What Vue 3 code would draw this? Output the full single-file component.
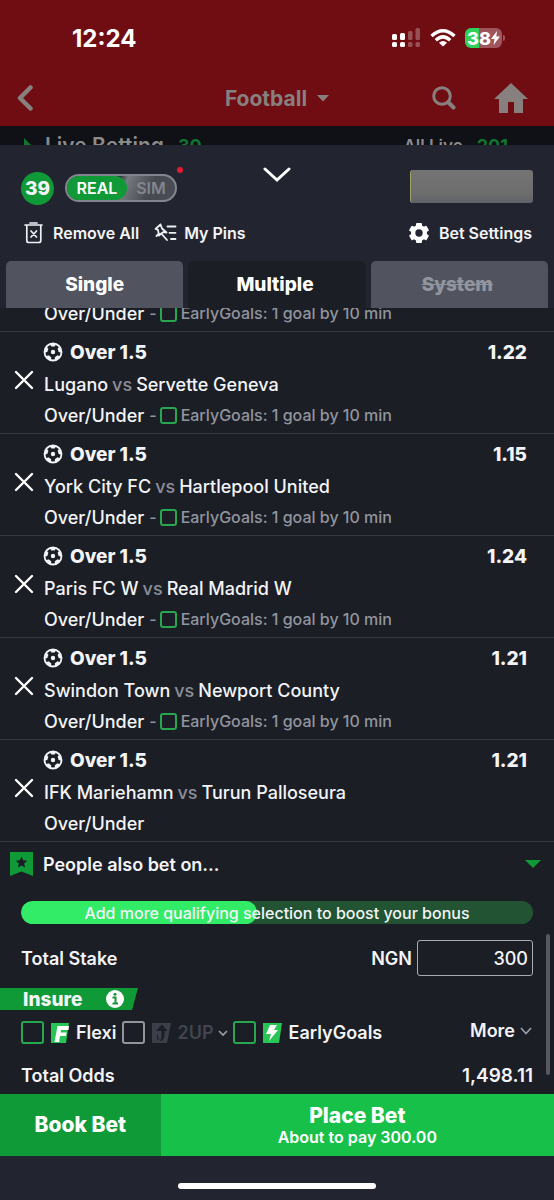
<script setup>
import { ref } from 'vue'

const bets = [
  { id: 1, home: 'Lugano', away: 'Servette Geneva', odds: '1.22', early: true },
  { id: 2, home: 'York City FC', away: 'Hartlepool United', odds: '1.15', early: true },
  { id: 3, home: 'Paris FC W', away: 'Real Madrid W', odds: '1.24', early: true },
  { id: 4, home: 'Swindon Town', away: 'Newport County', odds: '1.21', early: true },
  { id: 5, home: 'IFK Mariehamn', away: 'Turun Palloseura', odds: '1.21', early: false },
]
const patchAngles = [0, 72, 144, 216, 288]
const stake = ref('300')
</script>

<template>
  <div class="screen">
    <div class="status">
      <span class="clock">12:24</span>
      <div class="indicators">
        <svg class="signal" width="30" height="20" viewBox="0 0 30 20" fill="#fff">
          <rect x="1" y="6" width="5" height="6" rx="1.5" /><rect x="9" y="5" width="5" height="7" rx="1.5" />
          <rect x="1" y="14" width="5" height="5" rx="1.5" /><rect x="9" y="14" width="5" height="5" rx="1.5" />
          <g opacity=".28"><rect x="17" y="3" width="4.500" height="9" rx="1.500" /><rect x="24.500" y="0" width="4.500" height="12" rx="1.500" /><rect x="17" y="14" width="4.500" height="5" rx="1.500" /><rect x="24.500" y="14" width="4.500" height="5" rx="1.500" /></g>
        </svg>
        <svg width="26" height="20" viewBox="0 0 26 20" fill="none" stroke="#fff" stroke-width="3.400">
          <path d="M1.500 8Q13-2.500 24.500 8" /><path d="M5.800 12.200Q13 5.600 20.200 12.200" />
          <path d="M13 18.600L9 14.700Q13 11.400 17 14.700Z" fill="#fff" stroke="none" />
        </svg>
        <div class="battery">
          <span>38</span>
          <svg width="9" height="14" viewBox="0 0 9 14"><path d="M6 0L0 8h3.500L2.500 14L9 5.500H5.300z" fill="#fff" /></svg>
        </div>
      </div>
    </div>

    <header class="topbar">
      <button class="plain" aria-label="Back">
        <svg width="18" height="28" viewBox="0 0 18 28"><path d="M15.500 3.500L5 14l10.500 10.500" fill="none" stroke="#87807e" stroke-width="4.500" stroke-linecap="round" stroke-linejoin="round" /></svg>
      </button>
      <button class="plain sport">Football
        <svg width="12" height="7" viewBox="0 0 12 7"><path d="M0 0h12L6 6.500z" fill="#87807e" /></svg>
      </button>
      <div class="topicons">
        <button class="plain" aria-label="Search">
          <svg width="24" height="24" viewBox="0 0 24 24" fill="none" stroke="#87807e"><circle cx="10" cy="10" r="8.300" stroke-width="3" /><path d="M16.500 16.500L21.500 21.500" stroke-width="4" stroke-linecap="round" /></svg>
        </button>
        <button class="plain" aria-label="Home">
          <svg width="34" height="30" viewBox="0 0 34 30"><path d="M17 0L34 16h-5v14h-9V19h-6v11H5V16H0z" fill="#87807e" /></svg>
        </button>
      </div>
    </header>

    <div class="strip">
      <span class="livetitle"><svg width="7" height="14" viewBox="0 0 7 14"><path d="M0 0l7 7-7 7z" fill="#12742e" /></svg>Live Betting <b>30</b></span>
      <span class="alllive">All Live <b>201</b></span>
    </div>

    <main class="sheet">
      <div class="sheethead">
        <div class="modes">
          <span class="count">39</span>
          <div class="switch"><button class="on">REAL</button><button>SIM</button><i class="dot"></i></div>
        </div>
        <button class="plain collapse" aria-label="Collapse">
          <svg width="28" height="16" viewBox="0 0 28 16"><path d="M2 2L14 13L26 2" fill="none" stroke="#fff" stroke-width="3" stroke-linecap="round" /></svg>
        </button>
        <div class="balance"></div>
      </div>

      <div class="actions">
        <button class="plain act">
          <svg width="20" height="22" viewBox="0 0 20 22" fill="none" stroke="#eef0f4" stroke-width="1.700" stroke-linecap="round"><path d="M1 3h17M6 1h7M2.800 3.500v15q0 2 2 2h10q2 0 2-2v-15" /><path d="M7 9l5.500 6M12.500 9L7 15" /></svg>
          Remove All
        </button>
        <button class="plain act pins">
          <svg width="23" height="20" viewBox="0 0 23 20" fill="none" stroke="#eef0f4" stroke-width="1.800" stroke-linecap="round" stroke-linejoin="round"><path d="M6.500 1.500L1.500 6L4 6.800L5 12.500L7.200 10.500L13 17M7.200 10.500L9.500 9L12.500 9.500L8 5.500L6.500 1.500M5 10.500L2.500 13M13.500 3.500h8M15.500 9.800h6M17 16h4.500" /></svg>
          My Pins
        </button>
        <button class="plain act settings">
          <svg width="22" height="22" viewBox="0 0 22 22"><g fill="#fff"><circle cx="11" cy="11" r="8" /><rect x="8" y="1" width="6" height="20" rx="1" /><rect x="8" y="1" width="6" height="20" rx="1" transform="rotate(60 11 11)" /><rect x="8" y="1" width="6" height="20" rx="1" transform="rotate(120 11 11)" /></g><circle cx="11" cy="11" r="3.700" fill="#22252f" /></svg>
          Bet Settings
        </button>
      </div>

      <nav class="tabs">
        <button>Single</button>
        <button class="active">Multiple</button>
        <button class="off">System</button>
      </nav>

      <section class="list">
        <div class="bet partial">
          <div class="market">Over/Under <label class="early"><span>-</span><input type="checkbox" />EarlyGoals: 1 goal by 10 min</label></div>
        </div>
        <article v-for="b in bets" :key="b.id" class="bet">
          <button class="plain remove" :aria-label="'Remove ' + b.home">
            <svg width="20" height="20" viewBox="0 0 20 20"><path d="M2 2L18 18M18 2L2 18" stroke="#fff" stroke-width="2.400" stroke-linecap="round" /></svg>
          </button>
          <div class="info">
            <div class="pick">
              <svg width="20" height="20" viewBox="0 0 20 20">
                <circle cx="10" cy="10" r="8.500" fill="none" stroke="#f3f4f7" stroke-width="1.800" />
                <circle cx="10" cy="10" r="2.200" fill="#f3f4f7" />
                <path v-for="a in patchAngles" :key="a" d="M6.600 1.800L8.300 4.600H11.700L13.400 1.800z" :transform="`rotate(${a} 10 10)`" fill="#f3f4f7" />
              </svg>
              <strong>Over 1.5</strong>
              <strong class="odds">{{ b.odds }}</strong>
            </div>
            <div class="teams">{{ b.home }} <span>vs</span> {{ b.away }}</div>
            <div class="market">Over/Under <label v-if="b.early" class="early"><span>-</span><input type="checkbox" />EarlyGoals: 1 goal by 10 min</label></div>
          </div>
        </article>
      </section>

      <section class="summary">
        <button class="plain people">
          <svg width="23" height="24" viewBox="0 0 23 24"><path d="M0 0h23v24l-11.500-4.500L0 24z" fill="#109a37" /><path d="M11.500 4.500l1.700 3.800 4 .4-3 2.800.9 4-3.600-2.100-3.600 2.100.9-4-3-2.800 4-.4z" fill="#1b1e25" /></svg>
          People also bet on…
          <svg class="down" width="16" height="8" viewBox="0 0 16 8"><path d="M0 0h16L8 8z" fill="#109a37" /></svg>
        </button>
        <div class="bonus"><span class="fill"></span><span class="bonustext">Add more qualifying selection to boost your bonus</span></div>
        <div class="line stakeline">
          <label for="stake">Total Stake</label>
          <div class="stake"><span>NGN</span><input id="stake" v-model="stake" type="text" inputmode="decimal" /></div>
        </div>
        <div class="insure">Insure
          <svg width="18" height="18" viewBox="0 0 18 18"><circle cx="9" cy="9" r="9" fill="#fff" /><path d="M6.500 7.500H9.500V13M6.500 13.500h5.500" stroke="#109a37" stroke-width="2" fill="none" /><circle cx="9" cy="4.300" r="1.500" fill="#109a37" /></svg>
        </div>
        <div class="options">
          <label class="opt"><input type="checkbox" />
            <svg width="18" height="20" viewBox="0 0 18 20"><path d="M0 0h18l-3 20H0z" fill="#27c456" /><path d="M6.500 3H18l-.5 4H10l-.4 2.500h6l-.6 3.500H9l-.9 6H3.500z" fill="#fff" /></svg>Flexi</label>
          <label class="opt dim"><input type="checkbox" disabled />
            <svg width="19" height="20" viewBox="0 0 19 20"><path d="M0 0h19l-4 20H0z" fill="#3c3f49" /><path d="M10 1.500L15.500 8H12.500v5q-1 5-5 5 2.500-2 2-5V8H4zM5 10v5q0 2 2 2" fill="#1b1e25" /></svg>2UP
            <svg class="chev" width="10" height="8" viewBox="0 0 10 8"><path d="M1 2l4 4 4-4" fill="none" stroke="#9a9da7" stroke-width="1.700" /></svg></label>
          <label class="opt"><input type="checkbox" />
            <svg width="19" height="20" viewBox="0 0 19 20"><path d="M0 0h19l-3 20H0z" fill="#27c456" /><path d="M7 2h7l-3 5h4L6 18l2-7H3z" fill="#fff" /></svg>EarlyGoals</label>
          <button class="plain more">More <svg width="12" height="8" viewBox="0 0 12 8"><path d="M1 1l5 5.500L11 1" fill="none" stroke="#9a9da7" stroke-width="1.700" /></svg></button>
        </div>
        <div class="line oddsline"><span>Total Odds</span><span class="total">1,498.11</span></div>
        <i class="thumb"></i>
      </section>

      <div class="buttons">
        <button class="book">Book Bet</button>
        <button class="place">Place Bet<small>About to pay 300.00</small></button>
      </div>
      <footer class="homebar"><i></i></footer>
    </main>
  </div>
</template>

<style>
body { background: #22252f; }
</style>

<style scoped>
.screen {
  display: flex; flex-direction: column; height: 100vh; min-height: 900px; overflow: hidden;
  font-family: Inter, "Liberation Sans", sans-serif; font-size: 18px; font-weight: 500; color: #f3f4f7;
  background: #6f0d13;
}
.screen * { box-sizing: border-box; }
button, input { font: inherit; color: inherit; margin: 0; }
button { cursor: pointer; border: 0; padding: 0; }
svg { display: block; flex: none; }
.plain { background: none; display: flex; align-items: center; }

.status { height: 70px; padding: 6px 52px 0 72px; display: flex; justify-content: space-between; align-items: center; flex: none; }
.clock { font-size: 24px; font-weight: 700; color: #fff; }
.indicators { display: flex; align-items: center; gap: 9px; }
.battery {
  position: relative; width: 37px; height: 20px; border-radius: 6px; display: flex; align-items: center; justify-content: center;
  font-size: 18px; font-weight: 800; color: #fff; background: linear-gradient(90deg, #2fd158 38%, #a0545c 38%);
}
.battery::after { content: ""; position: absolute; right: -3px; top: 7px; width: 2px; height: 6px; border-radius: 0 2px 2px 0; background: #a0545c; }

.topbar { height: 56px; padding: 0 26px 0 15px; display: grid; grid-template-columns: 1fr auto 1fr; align-items: center; flex: none; }
.sport { font-size: 21px; font-weight: 700; color: #87807e; gap: 10px; padding-left: 11px; }
.topicons { display: flex; justify-content: flex-end; gap: 38px; align-items: center; }

.strip { height: 19px; background: #0f1116; overflow: hidden; padding: 8px 46px 0 24px; display: flex; justify-content: space-between; flex: none; color: #8b8b8c; font-size: 21px; line-height: 24px; font-weight: 600; }
.strip span { display: flex; align-items: flex-start; }
.strip b { color: #12742e; font-weight: 700; margin-left: 14px; font-size: 18px; }
.livetitle svg { margin: 4px 14px 0 0; }
.alllive { font-size: 17px; }

.sheet { flex: 1; min-height: 0; display: flex; flex-direction: column; background: #22252f; }
.sheethead { display: grid; grid-template-columns: 1fr auto 1fr; align-items: center; padding: 20px 21px 0; height: 62px; flex: none; }
.modes { display: flex; align-items: center; gap: 11px; padding-top: 4px; }
.count { width: 33px; height: 33px; border-radius: 50%; background: #109a37; font-size: 19px; font-weight: 800; display: grid; place-items: center; }
.switch { position: relative; display: flex; width: 112px; height: 28px; border: 2px solid #83868f; border-radius: 14px; background: linear-gradient(115deg, #35383f 45%, #777a80 52%, #464950 75%, #4b4e56); }
.switch button { flex: 1; font-size: 16px; font-weight: 600; background: none; color: #83868f; border-radius: 12px; }
.switch .on { flex: 0 0 60px; background: #109a37; color: #fff; }
.dot { position: absolute; right: -8px; top: -9px; width: 6px; height: 6px; border-radius: 50%; background: #e31b35; }
.collapse { align-self: start; padding-top: 2px; }
.balance { justify-self: end; width: 123px; height: 33px; border-radius: 3px; background: linear-gradient(#747474, #6d6d6e 70%, #606268); border-left: 1px solid #9ba36a; }

.actions { display: flex; align-items: center; padding: 0 22px 2px 24px; height: 54px; flex: none; }
.act { gap: 9px; font-size: 16px; font-weight: 600; }
.pins { margin-left: 15px; gap: 7px; }
.settings { margin-left: auto; gap: 9px; }

.tabs { display: grid; grid-template-columns: repeat(3, 1fr); gap: 5px; padding: 0 6px; flex: none; }
.tabs button { height: 47px; font-size: 19px; font-weight: 800; background: #51545e; border-radius: 5px 5px 0 0; color: #fff; }
.tabs .active { background: #1b1e25; padding-right: 4px; }
.tabs .off { color: #92959e; text-decoration: line-through; padding-right: 4px; }

.list { flex: 1; min-height: 0; overflow: hidden; display: flex; flex-direction: column; justify-content: flex-end; background: #1b1e25; }
.bet { flex: none; display: grid; grid-template-columns: 44px 1fr; padding: 5px 27px 4px 0; border-bottom: 1px solid #363940; }
.partial { grid-template-columns: 1fr; padding-left: 44px; padding-top: 0; }
.remove { justify-content: center; padding: 0 0 6px 4px; }
.pick { height: 30px; }
.market { height: 28px; }
.pick, .teams, .market { display: flex; align-items: center; }
.pick { gap: 7px; font-size: 19px; }
.pick svg { margin-left: -1px; }
.pick strong { font-weight: 800; }
.pick .odds { margin-left: auto; }
.teams { gap: 4px; height: 34px; }
.teams span { color: #8c8f99; }
.early { display: flex; align-items: center; color: #92959e; font-size: 16px; margin-left: 5px; }
input[type="checkbox"] { appearance: none; background: transparent; border: 2px solid #27a850; border-radius: 3px; flex: none; }
.early input { width: 17px; height: 17px; margin: 0 4px 0 3px; }

.summary { position: relative; background: #1b1e25; flex: none; }
.people { width: 100%; height: 44px; padding: 0 13px 0 10px; gap: 10px; font-size: 18px; font-weight: 600; }
.down { margin-left: auto; }
.bonus { position: relative; height: 23px; margin: 15px 21px 0; border-radius: 12px; background: #225434; display: grid; place-items: center; overflow: hidden; font-size: 16px; font-weight: 500; }
.fill { position: absolute; left: 0; top: 0; bottom: 0; width: 46%; background: #32ec68; border-radius: 12px; }
.bonustext { position: relative; }
.line { display: flex; justify-content: space-between; align-items: center; padding: 0 21px; font-weight: 600; }
.stakeline { padding-top: 16px; }
.stake { display: flex; align-items: center; gap: 5px; }
.stake input { width: 116px; height: 36px; border: 1px solid #a9abb3; border-radius: 3px; background: transparent; text-align: right; padding: 0 4px; font-weight: 500; font-size: 18px; }
.insure { display: flex; align-items: center; justify-content: space-between; width: 138px; height: 22px; margin-top: 12px; padding: 0 14px 0 23px; background: #109a37; clip-path: polygon(0 0, 100% 0, 132px 100%, 0 100%); font-size: 19px; font-weight: 800; }
.options { display: flex; align-items: center; padding: 0 22px 0 21px; height: 45px; gap: 5px; font-weight: 600; white-space: nowrap; }
.opt { display: flex; align-items: center; gap: 7px; }
.opt input { width: 23px; height: 23px; }
.dim { color: #42454f; }
.dim input { border-color: #92959e; }
.chev { margin-left: -3px; }
.more { margin-left: auto; gap: 5px; padding-bottom: 4px; }
.oddsline { height: 39px; padding-top: 2px; }
.total { font-size: 19px; }
.thumb { position: absolute; right: 4px; top: 92px; width: 4px; height: 141px; border-radius: 2px; background: #565962; }

.buttons { display: grid; grid-template-columns: 29fr 71fr; height: 62px; flex: none; }
.buttons button { color: #fff; font-size: 21px; font-weight: 800; line-height: 24px; }
.book { background: #109a37; }
.place { background: #17c149; }
.place small { display: block; font-size: 16px; line-height: 18px; font-weight: 600; }
.homebar { height: 44px; display: grid; place-items: center; padding-top: 16px; flex: none; }
.homebar i { width: 198px; height: 6px; border-radius: 3px; background: #fff; }
</style>
